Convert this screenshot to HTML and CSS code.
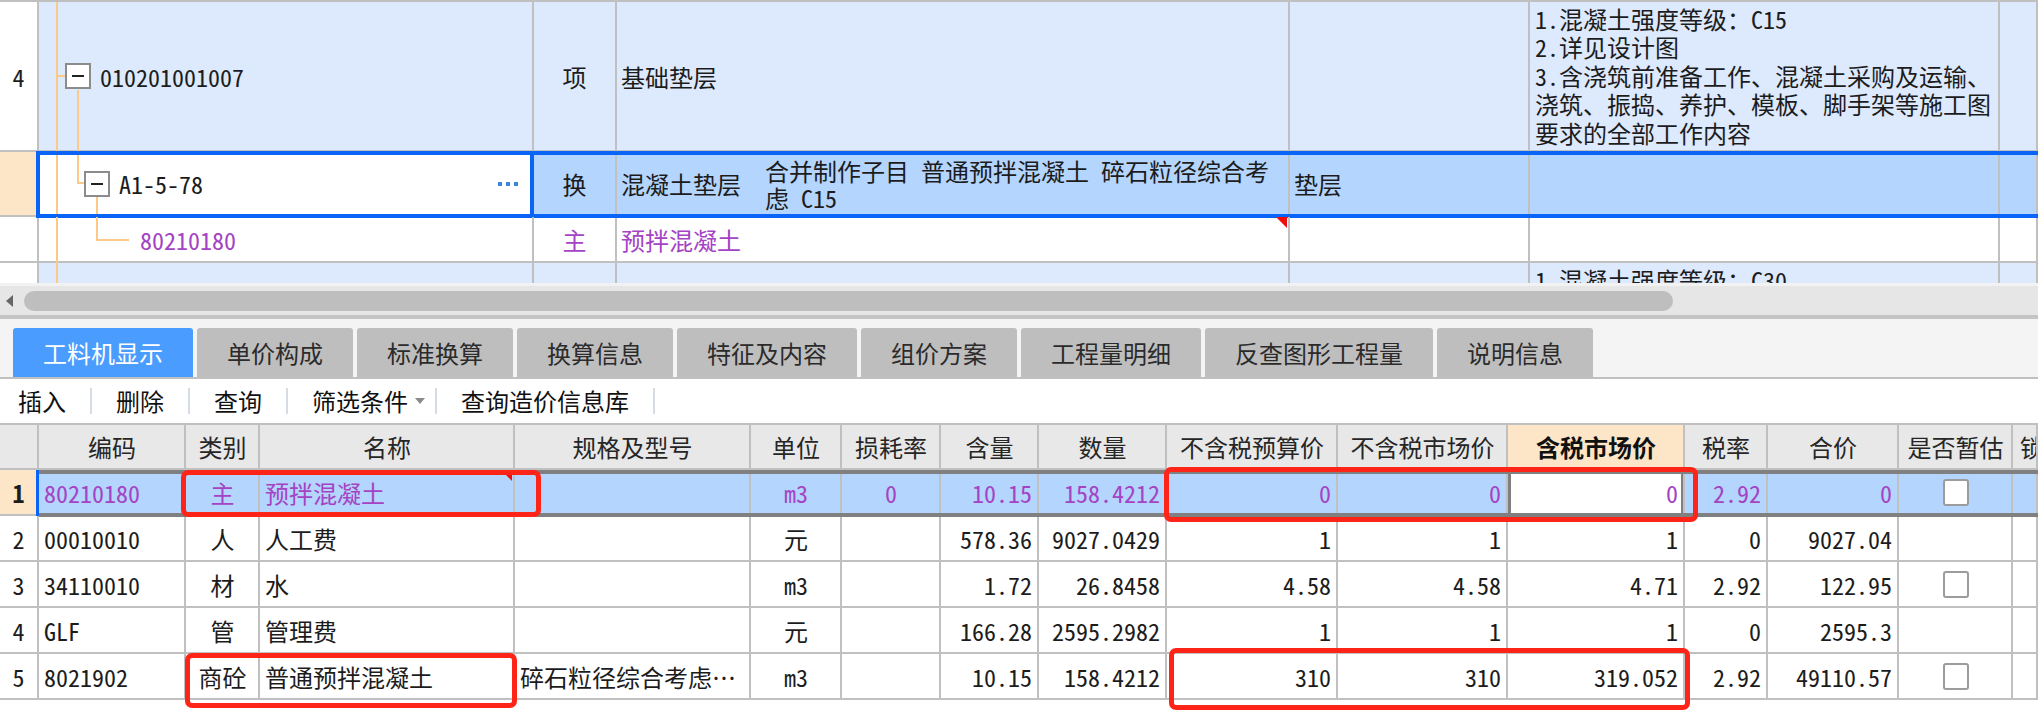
FILE: index.html
```html
<!DOCTYPE html>
<html lang="zh-CN">

<head>
  <meta charset="UTF-8">
  <meta name="viewport" content="width=device-width, initial-scale=1.0">
  <title>工料机显示</title>
  <link rel="stylesheet" href="styles.css">
</head>

<body>
  <!-- 清单 / 定额 -->
  <div class="upper">
    <div class="urow item">
      <div class="cell num">4</div>
      <div class="cell tree lv1">
        <i class="tl trunk"></i>
        <i class="tl h-in1"></i>
        <i class="tl v-out1"></i>
        <span class="box"></span>
        <span class="code">010201001007</span>
      </div>
      <div class="cell mid">项</div>
      <div class="cell">基础垫层</div>
      <div class="cell"></div>
      <div class="cell feat">1.混凝土强度等级：C15<br>2.详见设计图<br>3.含浇筑前准备工作、混凝土采购及运输、<br>浇筑、振捣、养护、模板、脚手架等施工图<br>要求的全部工作内容</div>
      <div class="cell"></div>
    </div>
    <div class="urow cur">
      <div class="cell num"></div>
      <div class="cell tree lv2">
        <i class="tl trunk"></i>
        <i class="tl v-in2"></i>
        <i class="tl h-in2"></i>
        <i class="tl v-out2"></i>
        <span class="box"></span>
        <span class="code">A1-5-78</span>
        <span class="more"><i></i><i></i><i></i></span>
      </div>
      <div class="cell mid">换</div>
      <div class="cell two">混凝土垫层<span class="fw">　</span>合并制作子目 普通预拌混凝土 碎石粒径综合考<br>虑 C15</div>
      <div class="cell">垫层</div>
      <div class="cell"></div>
      <div class="cell"></div>
    </div>
    <div class="urow main">
      <div class="cell num"></div>
      <div class="cell tree lv3">
        <i class="tl trunk"></i>
        <i class="tl v-in3"></i>
        <i class="tl h-in3"></i>
        <span class="code">80210180</span>
      </div>
      <div class="cell mid">主</div>
      <div class="cell flag">预拌混凝土</div>
      <div class="cell"></div>
      <div class="cell"></div>
      <div class="cell"></div>
    </div>
    <div class="urow item">
      <div class="cell num"></div>
      <div class="cell tree">
        <i class="tl trunk"></i>
      </div>
      <div class="cell mid"></div>
      <div class="cell"></div>
      <div class="cell"></div>
      <div class="cell feat">1.混凝土强度等级：C30<br>2.详见设计图<br>3.含浇筑前准备工作、混凝土采购及运输、<br>浇筑、振捣、养护、模板、脚手架等施工图<br>要求的全部工作内容</div>
      <div class="cell"></div>
    </div>
  </div>

  <div class="hscroll"><i class="arrow"></i><span class="thumb"></span></div>

  <div class="tabs">
    <span class="tab on">工料机显示</span>
    <span class="tab">单价构成</span>
    <span class="tab">标准换算</span>
    <span class="tab">换算信息</span>
    <span class="tab">特征及内容</span>
    <span class="tab">组价方案</span>
    <span class="tab">工程量明细</span>
    <span class="tab">反查图形工程量</span>
    <span class="tab">说明信息</span>
  </div>

  <div class="toolbar">
    <span class="tool">插入</span>
    <span class="tool">删除</span>
    <span class="tool">查询</span>
    <span class="tool drop">筛选条件<i class="caret"></i></span>
    <span class="tool">查询造价信息库</span>
  </div>

  <!-- 工料机 -->
  <div class="grid">
    <div class="lrow head">
      <div class="cell"></div>
      <div class="cell c">编码</div>
      <div class="cell c">类别</div>
      <div class="cell c">名称</div>
      <div class="cell c">规格及型号</div>
      <div class="cell c">单位</div>
      <div class="cell c">损耗率</div>
      <div class="cell c">含量</div>
      <div class="cell c">数量</div>
      <div class="cell c">不含税预算价</div>
      <div class="cell c">不含税市场价</div>
      <div class="cell c sort">含税市场价</div>
      <div class="cell c">税率</div>
      <div class="cell c">合价</div>
      <div class="cell c">是否暂估</div>
      <div class="cell lock">锁定数量</div>
    </div>
    <div class="lrow cur">
      <div class="cell num">1</div>
      <div class="cell">80210180</div>
      <div class="cell c">主</div>
      <div class="cell flag">预拌混凝土</div>
      <div class="cell"></div>
      <div class="cell c">m3</div>
      <div class="cell c">0</div>
      <div class="cell r">10.15</div>
      <div class="cell r">158.4212</div>
      <div class="cell r">0</div>
      <div class="cell r">0</div>
      <div class="cell r edit">0</div>
      <div class="cell r">2.92</div>
      <div class="cell r">0</div>
      <div class="cell c"><span class="chk"></span></div>
      <div class="cell"></div>
    </div>
    <div class="lrow">
      <div class="cell num">2</div>
      <div class="cell">00010010</div>
      <div class="cell c">人</div>
      <div class="cell">人工费</div>
      <div class="cell"></div>
      <div class="cell c">元</div>
      <div class="cell c"></div>
      <div class="cell r">578.36</div>
      <div class="cell r">9027.0429</div>
      <div class="cell r">1</div>
      <div class="cell r">1</div>
      <div class="cell r">1</div>
      <div class="cell r">0</div>
      <div class="cell r">9027.04</div>
      <div class="cell c"></div>
      <div class="cell"></div>
    </div>
    <div class="lrow">
      <div class="cell num">3</div>
      <div class="cell">34110010</div>
      <div class="cell c">材</div>
      <div class="cell">水</div>
      <div class="cell"></div>
      <div class="cell c">m3</div>
      <div class="cell c"></div>
      <div class="cell r">1.72</div>
      <div class="cell r">26.8458</div>
      <div class="cell r">4.58</div>
      <div class="cell r">4.58</div>
      <div class="cell r">4.71</div>
      <div class="cell r">2.92</div>
      <div class="cell r">122.95</div>
      <div class="cell c"><span class="chk"></span></div>
      <div class="cell"></div>
    </div>
    <div class="lrow">
      <div class="cell num">4</div>
      <div class="cell">GLF</div>
      <div class="cell c">管</div>
      <div class="cell">管理费</div>
      <div class="cell"></div>
      <div class="cell c">元</div>
      <div class="cell c"></div>
      <div class="cell r">166.28</div>
      <div class="cell r">2595.2982</div>
      <div class="cell r">1</div>
      <div class="cell r">1</div>
      <div class="cell r">1</div>
      <div class="cell r">0</div>
      <div class="cell r">2595.3</div>
      <div class="cell c"></div>
      <div class="cell"></div>
    </div>
    <div class="lrow">
      <div class="cell num">5</div>
      <div class="cell">8021902</div>
      <div class="cell c">商砼</div>
      <div class="cell">普通预拌混凝土</div>
      <div class="cell">碎石粒径综合考虑…</div>
      <div class="cell c">m3</div>
      <div class="cell c"></div>
      <div class="cell r">10.15</div>
      <div class="cell r">158.4212</div>
      <div class="cell r">310</div>
      <div class="cell r">310</div>
      <div class="cell r">319.052</div>
      <div class="cell r">2.92</div>
      <div class="cell r">49110.57</div>
      <div class="cell c"><span class="chk"></span></div>
      <div class="cell"></div>
    </div>

    <span class="mark m1"></span>
    <span class="mark m2"></span>
    <span class="mark m3"></span>
    <span class="mark m4"></span>
  </div>
</body>

</html>
```

FILE: styles.css
```css
* {
  box-sizing: border-box;
}
body {
  margin: 0;
  width: 2038px;
  height: 724px;
  overflow: hidden;
  background: #fff;
  color: #1c1c1c;
  font-family: "Noto Sans CJK SC", sans-serif;
  font-size: 24px;
  font-feature-settings: "hwid";
}

/* upper grid */
.upper {
  height: 283px;
  overflow: hidden;
  border-top: 2px solid #c0c0c0;
}
.urow {
  display: grid;
  grid-template-columns: 39px 495px 83px 673px 240px 470px 1fr;
}
.urow.item {
  height: 150px;
  background: #dde9fc;
}
.urow.cur {
  position: relative;
  height: 65px;
  background: #b4d5fe;
}
.urow.cur::after {
  content: "";
  position: absolute;
  left: 36px;
  right: 0;
  top: -1px;
  bottom: -1px;
  border: 4px solid #0a64f8;
  border-right: none;
  pointer-events: none;
}
.urow.main {
  height: 46px;
}
.cell {
  display: flex;
  align-items: center;
  padding: 0 4px;
  border-right: 2px solid #c0c0c0;
  border-bottom: 2px solid #c0c0c0;
  line-height: 27px;
  white-space: nowrap;
  overflow: hidden;
}
.cell.mid, .cell.c {
  justify-content: center;
}
.cell.r {
  justify-content: flex-end;
  padding-right: 5px;
}
.num {
  justify-content: center;
  background: #fff;
}
.cur .num {
  background: #fde6c8;
}
.cell.two {
  white-space: normal;
}
.fw {
  font-feature-settings: normal;
}
.cell.feat {
  white-space: normal;
  line-height: 28.5px;
  padding-left: 5px;
}
.main, .main .cell {
  color: #a443c4;
}
.cell.flag {
  position: relative;
  overflow: visible;
}
.cell.flag::after {
  content: "";
  position: absolute;
  right: 1px;
  top: 0;
  border-top: 11px solid #f20d0d;
  border-left: 11px solid transparent;
}

/* tree */
.tree {
  position: relative;
  overflow: visible;
  background: transparent;
}
.cur .tree {
  background: #fff;
  border-right: 4px solid #0a64f8;
  padding-right: 12px;
}
.lv1 { padding-left: 26px; }
.lv2 { padding-left: 45px; }
.lv3 { padding-left: 101px; }
.tl {
  position: absolute;
  background: #fcc987;
}
.trunk { left: 17px; top: 0; bottom: -2px; width: 2px; }
.h-in1 { left: 17px; top: 73px; width: 9px; height: 2px; }
.v-out1 { left: 38px; top: 88px; bottom: -2px; width: 2px; }
.v-in2 { left: 38px; top: 0; height: 32px; width: 2px; }
.h-in2 { left: 38px; top: 30px; width: 8px; height: 2px; }
.v-out2 { left: 57px; top: 45px; bottom: 0; width: 2px; }
.v-in3 { left: 57px; top: 0; height: 24px; width: 2px; }
.h-in3 { left: 57px; top: 22px; width: 33px; height: 2px; }
.box {
  position: relative;
  width: 26px;
  height: 26px;
  margin-right: 9px;
  border: 2px solid #8c8c8c;
  background: #fff;
}
.box::after {
  content: "";
  position: absolute;
  left: 5px;
  right: 5px;
  top: 10px;
  height: 2px;
  background: #222;
}
.more {
  display: flex;
  gap: 4px;
  margin-left: auto;
}
.more i {
  width: 4px;
  height: 4px;
  background: #3a86d8;
}

/* scrollbar */
.hscroll {
  display: flex;
  align-items: center;
  height: 36px;
  padding-left: 6px;
  background: #e6e6e6;
  border-top: 3px solid #f2f2f2;
  border-bottom: 4px solid #c4c4c4;
}
.arrow {
  width: 0;
  height: 0;
  border-top: 6px solid transparent;
  border-bottom: 6px solid transparent;
  border-right: 7px solid #666;
}
.thumb {
  width: 1649px;
  height: 20px;
  margin-left: 11px;
  border-radius: 10px;
  background: #bebebe;
}

/* tabs */
.tabs {
  display: flex;
  gap: 4px;
  padding: 9px 0 0 13px;
  background: #f4f4f4;
  border-bottom: 2px solid #c0c0c0;
}
.tab {
  height: 49px;
  line-height: 49px;
  padding: 0 30px;
  border-radius: 3px 3px 0 0;
  background: #bebebe;
  color: #2b2b2b;
}
.tab.on {
  background: #4b9cff;
  color: #fff;
}

/* toolbar */
.toolbar {
  display: flex;
  align-items: center;
  height: 44px;
  padding-left: 18px;
}
.tool {
  display: flex;
  align-items: center;
  padding: 0 24px;
  line-height: 26px;
  border-right: 2px solid #d6dce3;
  color: #111;
}
.tool:first-child {
  padding-left: 0;
}
.tool.drop {
  padding-right: 10px;
}
.caret {
  margin-left: 7px;
  border-top: 6px solid #8a8a8a;
  border-left: 5px solid transparent;
  border-right: 5px solid transparent;
}

/* lower grid */
.grid {
  position: relative;
}
.lrow {
  display: grid;
  grid-template-columns: 39px 147px 74px 255px 236px 91px 99px 98px 128px 171px 170px 177px 83px 131px 114px 1fr;
  height: 46px;
}
.lrow .cell {
  padding-left: 5px;
}
.lrow .num {
  padding: 0;
}
.lrow.head {
  height: 47px;
  border-top: 2px solid #c0c0c0;
  background: #e8e8e8;
  color: #262626;
}
.lrow.head .sort {
  background: #fde6c8;
  font-weight: bold;
  color: #111;
}
.lrow.head .lock {
  padding-left: 7px;
}
.lrow.cur {
  position: relative;
  background: #b4d5fe;
  color: #a443c4;
}
.lrow.cur .num {
  color: #1c1c1c;
  font-weight: bold;
}
.lrow.cur::before {
  content: "";
  position: absolute;
  left: 36px;
  top: 0;
  bottom: 0;
  width: 3px;
  background: #0a64f8;
}
.lrow.cur::after {
  content: "";
  position: absolute;
  left: 39px;
  right: 0;
  top: 0;
  bottom: -1px;
  border-top: 4px solid #808080;
  border-bottom: 4px solid #808080;
  pointer-events: none;
}
.lrow .flag::after {
  top: 4px;
  border-top-width: 7px;
  border-left-width: 7px;
}
.cell.edit {
  background: #fff;
  box-shadow: inset 3px 0 #808080, inset -2px 0 #808080;
}
.chk {
  width: 26px;
  height: 27px;
  border: 2px solid #9c9c9c;
  border-radius: 3px;
  background: #fff;
}
.mark {
  position: absolute;
  border: 5px solid #ff2418;
  border-radius: 7px;
}
.m1 { left: 181px; top: 47px; width: 360px; height: 47px; }
.m2 { left: 185px; top: 230px; width: 332px; height: 55px; }
.m3 { left: 1164px; top: 44px; width: 534px; height: 55px; }
.m4 { left: 1169px; top: 225px; width: 521px; height: 62px; }
```
